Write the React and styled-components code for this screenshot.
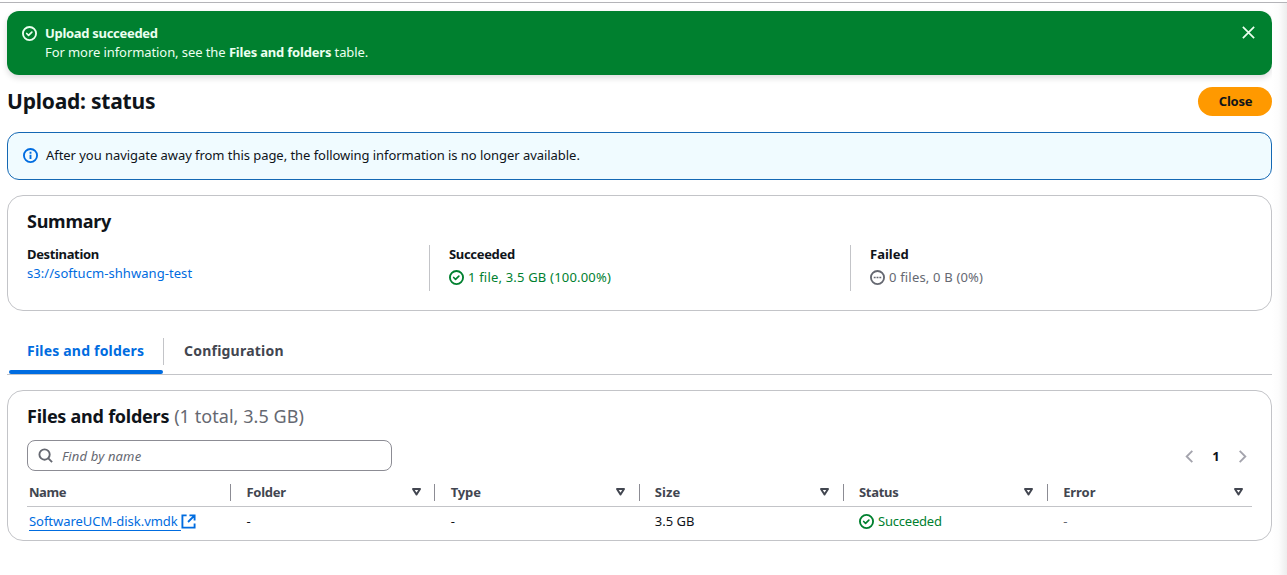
import React from "react";
import styled, { createGlobalStyle } from "styled-components";

const GlobalStyle = createGlobalStyle`
  *, *::before, *::after { box-sizing: border-box; }
  body {
    margin: 0;
    background: #fff;
    color: #0f141a;
    font-family: "Noto Sans", "Open Sans", sans-serif;
    font-size: 13px;
    line-height: 20px;
  }
`;

const Page = styled.div`
  display: flex;
  height: 575px;
  overflow: hidden;
  border-top: 2px solid #fff;
`;

const Frame = styled.div`
  flex: 1;
  display: flex;
  border-top: 1px solid #b4b4b8;
  min-width: 0;
`;

const Main = styled.main`
  flex: 1;
  min-width: 0;
  display: flex;
  flex-direction: column;
  padding: 8px 0 0 7px;
`;

const EdgeShade = styled.div`
  width: 15px;
  background: linear-gradient(to right, #fff 0%, #fcfcfc 45%, #ededed 100%);
`;

const Text = styled.span`
  white-space: nowrap;
  letter-spacing: ${(p) => p.$ls || 0}px;
  font-weight: ${(p) => (p.$bold ? 700 : 400)};
`;

const Banner = styled.section`
  display: flex;
  align-items: flex-start;
  height: 64px;
  padding: 13px 16px 13px 15px;
  border-radius: 12px;
  background: #00802f;
  color: #ebfff0;
  box-shadow: 0 3px 6px rgba(0, 7, 22, 0.14);
`;

const BannerBody = styled.div`
  flex: 1;
  display: flex;
  flex-direction: column;
  margin-left: 8px;
  line-height: 19px;
`;

const IconSlot = styled.span`
  display: inline-flex;
  flex: none;
  margin-top: ${(p) => p.$top || 0}px;
`;

const PlainButton = styled.button`
  display: inline-flex;
  padding: 0;
  border: 0;
  background: none;
  color: inherit;
`;

const TitleRow = styled.header`
  display: flex;
  align-items: center;
  justify-content: space-between;
  height: 57px;
  padding-bottom: 4px;
`;

const Title = styled.h1`
  margin: 0;
  padding-bottom: 2px;
  font-size: 21px;
  line-height: 28px;
  letter-spacing: -0.22px;
`;

const PrimaryButton = styled.button`
  width: 74px;
  height: 29px;
  padding: 0 0 2px 1px;
  border: 0;
  border-radius: 15px;
  background: #ff9900;
  color: #0f141a;
  font: inherit;
`;

const Notice = styled.section`
  display: flex;
  align-items: center;
  gap: 8px;
  height: 48px;
  padding: 0 15px 1px;
  border: 1px solid #1468b4;
  border-radius: 12px;
  background: #f0fbff;
`;

const NoticeText = styled(Text)`
  padding-bottom: 1px;
`;

const Card = styled.section`
  height: ${(p) => p.$height}px;
  margin-top: ${(p) => p.$gap}px;
  padding: 13px 19px 0;
  border: 1px solid #c3c4c8;
  border-radius: 16px;
`;

const CardTitle = styled.h2`
  margin: 0;
  font-size: 18px;
  line-height: 24px;
  display: flex;
  gap: 5px;
`;

const Count = styled(Text)`
  color: #656871;
`;

const SummaryGrid = styled.div`
  display: grid;
  grid-template-columns: 402px 421px 1fr;
  margin-top: 12px;
`;

const SummaryItem = styled.div`
  display: flex;
  flex-direction: column;
  height: 46px;
  padding-left: ${(p) => (p.$divided ? 19 : 0)}px;
  border-left: ${(p) => (p.$divided ? "1px solid #c3c4c8" : "0")};
  line-height: 19px;
`;

const Status = styled.span`
  display: inline-flex;
  align-items: center;
  gap: 4px;
  margin-top: ${(p) => p.$top || 0}px;
  color: ${(p) => (p.$muted ? "#656871" : "#00802f")};
`;

const Link = styled.a`
  display: inline-flex;
  align-items: center;
  margin-top: ${(p) => p.$top || 0}px;
  color: #006ce0;
`;

const LinkLabel = styled(Text)`
  line-height: 17px;
  border-bottom: ${(p) => (p.$underlined ? "1px solid #006ce0" : "0")};
  padding-right: ${(p) => (p.$underlined ? 3 : 0)}px;
`;

const Tabs = styled.nav`
  display: flex;
  height: 48px;
  margin-top: 16px;
  border-bottom: 1px solid #c3c4c8;
`;

const Tab = styled.div`
  display: flex;
  flex-direction: column;
  justify-content: space-between;
  width: ${(p) => p.$width}px;
  padding-left: 2px;
  font-size: 14px;
  color: ${(p) => (p.$active ? "#006ce0" : "#424650")};
`;

const TabLabel = styled.div`
  height: 27px;
  margin-top: 11px;
  padding-left: 18px;
  line-height: 26px;
  border-right: ${(p) => (p.$divided ? "1px solid #c3c4c8" : "0")};
`;

const TabMarker = styled.div`
  height: 4px;
  margin-right: 1px;
  border-radius: 2px;
  background: #006ce0;
`;

const Toolbar = styled.div`
  display: flex;
  justify-content: space-between;
  align-items: center;
  margin-top: 12px;
`;

const SearchBox = styled.div`
  display: flex;
  align-items: center;
  gap: 9px;
  width: 365px;
  height: 31px;
  padding-left: 10px;
  border: 1px solid #8c8c94;
  border-radius: 8px;
  color: #656871;
  font-style: italic;
`;

const Pager = styled.div`
  display: flex;
  align-items: center;
  gap: 14px;
  padding: 1px 2px 0 0;
  color: #a4a4ad;
`;

const PageNumber = styled(Text)`
  width: 10px;
  text-align: center;
  color: #0f141a;
`;

const Row = styled.div`
  display: grid;
  grid-template-columns: repeat(6, 1fr);
  align-items: center;
  height: ${(p) => p.$height}px;
  padding-top: ${(p) => p.$top || 0}px;
  border-bottom: ${(p) => (p.$ruled ? "1px solid #c3c4c8" : "0")};
`;

const HeadCell = styled.div`
  display: flex;
  align-items: center;
  justify-content: space-between;
  height: 17px;
  padding: 0 ${(p) => (p.$last ? 8 : 12.5)}px 0 ${(p) => (p.$first ? 2 : 15.3)}px;
  border-right: ${(p) => (p.$last ? "0" : "1px solid #8c8c94")};
  color: #424650;
`;

const Cell = styled.div`
  display: flex;
  align-items: center;
  padding: 0 0 ${(p) => (p.$first ? 0 : 2)}px ${(p) => (p.$first ? 2 : 15.3)}px;
  color: ${(p) => (p.$muted ? "#656871" : "inherit")};
`;

const CheckCircle = () => (
  <svg width="15" height="15" viewBox="0 0 16 16" fill="none" stroke="currentColor" strokeWidth="2">
    <circle cx="8" cy="8" r="7" />
    <path d="m5 8 2 2 3.521-3.521" strokeLinecap="round" strokeLinejoin="round" strokeWidth="1.8" />
  </svg>
);

const PendingCircle = () => (
  <svg width="15" height="15" viewBox="0 0 16 16" fill="none" stroke="currentColor" strokeWidth="2">
    <circle cx="8" cy="8" r="7" />
    <path d="M4 7.1h2v1.8H4zM7 7.1h2v1.8H7zM10 7.1h2v1.8h-2z" fill="currentColor" stroke="none" />
  </svg>
);

const InfoCircle = () => (
  <svg width="15" height="15" viewBox="0 0 16 16" fill="none" stroke="#006ce0" strokeWidth="2">
    <circle cx="8" cy="8" r="7" />
    <path d="M8 11.8V7.2M8 6V4.1" />
  </svg>
);

const CloseIcon = () => (
  <svg width="15" height="15" viewBox="0 0 16 16" fill="none" stroke="currentColor" strokeWidth="1.8">
    <path d="m2 2 12 12M14 2 2 14" />
  </svg>
);

const SearchIcon = () => (
  <svg width="15" height="15" viewBox="0 0 16 16" fill="none" stroke="currentColor" strokeWidth="2">
    <circle cx="7" cy="7" r="5.5" />
    <path d="m15 15-4.2-4.2" />
  </svg>
);

const ExternalIcon = () => (
  <svg width="15" height="15" viewBox="0 0 16 16" fill="none" stroke="#006ce0" strokeWidth="2">
    <path d="M14.5 10v4.5h-13v-13H6M9 1.5h5.5V7M7.5 8.5l7-7" />
  </svg>
);

const Chevron = ({ left }) => (
  <svg width="15" height="15" viewBox="0 0 16 16" fill="none" stroke="currentColor" strokeWidth="2">
    <path d={left ? "M11 2 5 8l6 6" : "m5 2 6 6-6 6"} />
  </svg>
);

const SortIcon = () => (
  <svg width="11" height="10" viewBox="0 0 11 10" fill="none" stroke="currentColor" strokeWidth="2">
    <path d="M2 2h7L5.5 7.5z" strokeLinejoin="round" />
  </svg>
);

const columns = [
  { label: "Name", ls: -0.45 },
  { label: "Folder", ls: -0.25 },
  { label: "Type", ls: -0.1 },
  { label: "Size", ls: 0.1 },
  { label: "Status", ls: -0.3 },
  { label: "Error", ls: -0.05 },
];

export default function App() {
  return (
    <>
      <GlobalStyle />
      <Page>
        <Frame>
          <Main>
            <Banner>
              <IconSlot $top={2}><CheckCircle /></IconSlot>
              <BannerBody>
                <Text $bold $ls={-0.3}>Upload succeeded</Text>
                <Text $ls={-0.08}>For more information, see the <Text $bold $ls={-0.2}>Files and folders</Text> table.</Text>
              </BannerBody>
              <PlainButton aria-label="Dismiss"><IconSlot $top={1}><CloseIcon /></IconSlot></PlainButton>
            </Banner>

            <TitleRow>
              <Title>Upload: status</Title>
              <PrimaryButton><Text $bold $ls={-0.25}>Close</Text></PrimaryButton>
            </TitleRow>

            <Notice>
              <InfoCircle />
              <NoticeText $ls={-0.05}>After you navigate away from this page, the following information is no longer available.</NoticeText>
            </Notice>

            <Card $height={116} $gap={15}>
              <CardTitle><Text $bold $ls={-0.25}>Summary</Text></CardTitle>
              <SummaryGrid>
                <SummaryItem>
                  <Text $bold $ls={-0.35}>Destination</Text>
                  <Link $top={1}><LinkLabel $ls={0.06}>s3://softucm-shhwang-test</LinkLabel></Link>
                </SummaryItem>
                <SummaryItem $divided>
                  <Text $bold $ls={-0.33}>Succeeded</Text>
                  <Status $top={4}><CheckCircle /><Text $ls={0.19}>1 file, 3.5 GB (100.00%)</Text></Status>
                </SummaryItem>
                <SummaryItem $divided>
                  <Text $bold>Failed</Text>
                  <Status $muted $top={4}><PendingCircle /><Text $ls={0.18}>0 files, 0 B (0%)</Text></Status>
                </SummaryItem>
              </SummaryGrid>
            </Card>

            <Tabs>
              <Tab $active $width={157}>
                <TabLabel $divided><Text $bold $ls={0.2}>Files and folders</Text></TabLabel>
                <TabMarker />
              </Tab>
              <Tab $width={140}>
                <TabLabel><Text $bold $ls={0.22}>Configuration</Text></TabLabel>
              </Tab>
            </Tabs>

            <Card $height={151} $gap={15}>
              <CardTitle>
                <Text $bold $ls={-0.25}>Files and folders</Text>
                <Count $ls={0.05}>(1 total, 3.5 GB)</Count>
              </CardTitle>
              <Toolbar>
                <SearchBox><SearchIcon /><Text $ls={0.15}>Find by name</Text></SearchBox>
                <Pager>
                  <Chevron left />
                  <PageNumber $bold>1</PageNumber>
                  <Chevron />
                </Pager>
              </Toolbar>
              <Row $height={36} $top={7} $ruled>
                {columns.map((c, i) => (
                  <HeadCell key={c.label} $first={i === 0} $last={i === 5}>
                    <Text $bold $ls={c.ls}>{c.label}</Text>
                    {i > 0 && <SortIcon />}
                  </HeadCell>
                ))}
              </Row>
              <Row $height={29}>
                <Cell $first>
                  <Link><LinkLabel $underlined $ls={-0.04}>SoftwareUCM-disk.vmdk</LinkLabel><ExternalIcon /></Link>
                </Cell>
                <Cell><Text>-</Text></Cell>
                <Cell><Text>-</Text></Cell>
                <Cell><Text>3.5 GB</Text></Cell>
                <Cell>
                  <Status>
                    <IconSlot $top={2}><CheckCircle /></IconSlot>
                    <Text $ls={-0.2}>Succeeded</Text>
                  </Status>
                </Cell>
                <Cell $muted><Text>-</Text></Cell>
              </Row>
            </Card>
          </Main>
          <EdgeShade />
        </Frame>
      </Page>
    </>
  );
}
